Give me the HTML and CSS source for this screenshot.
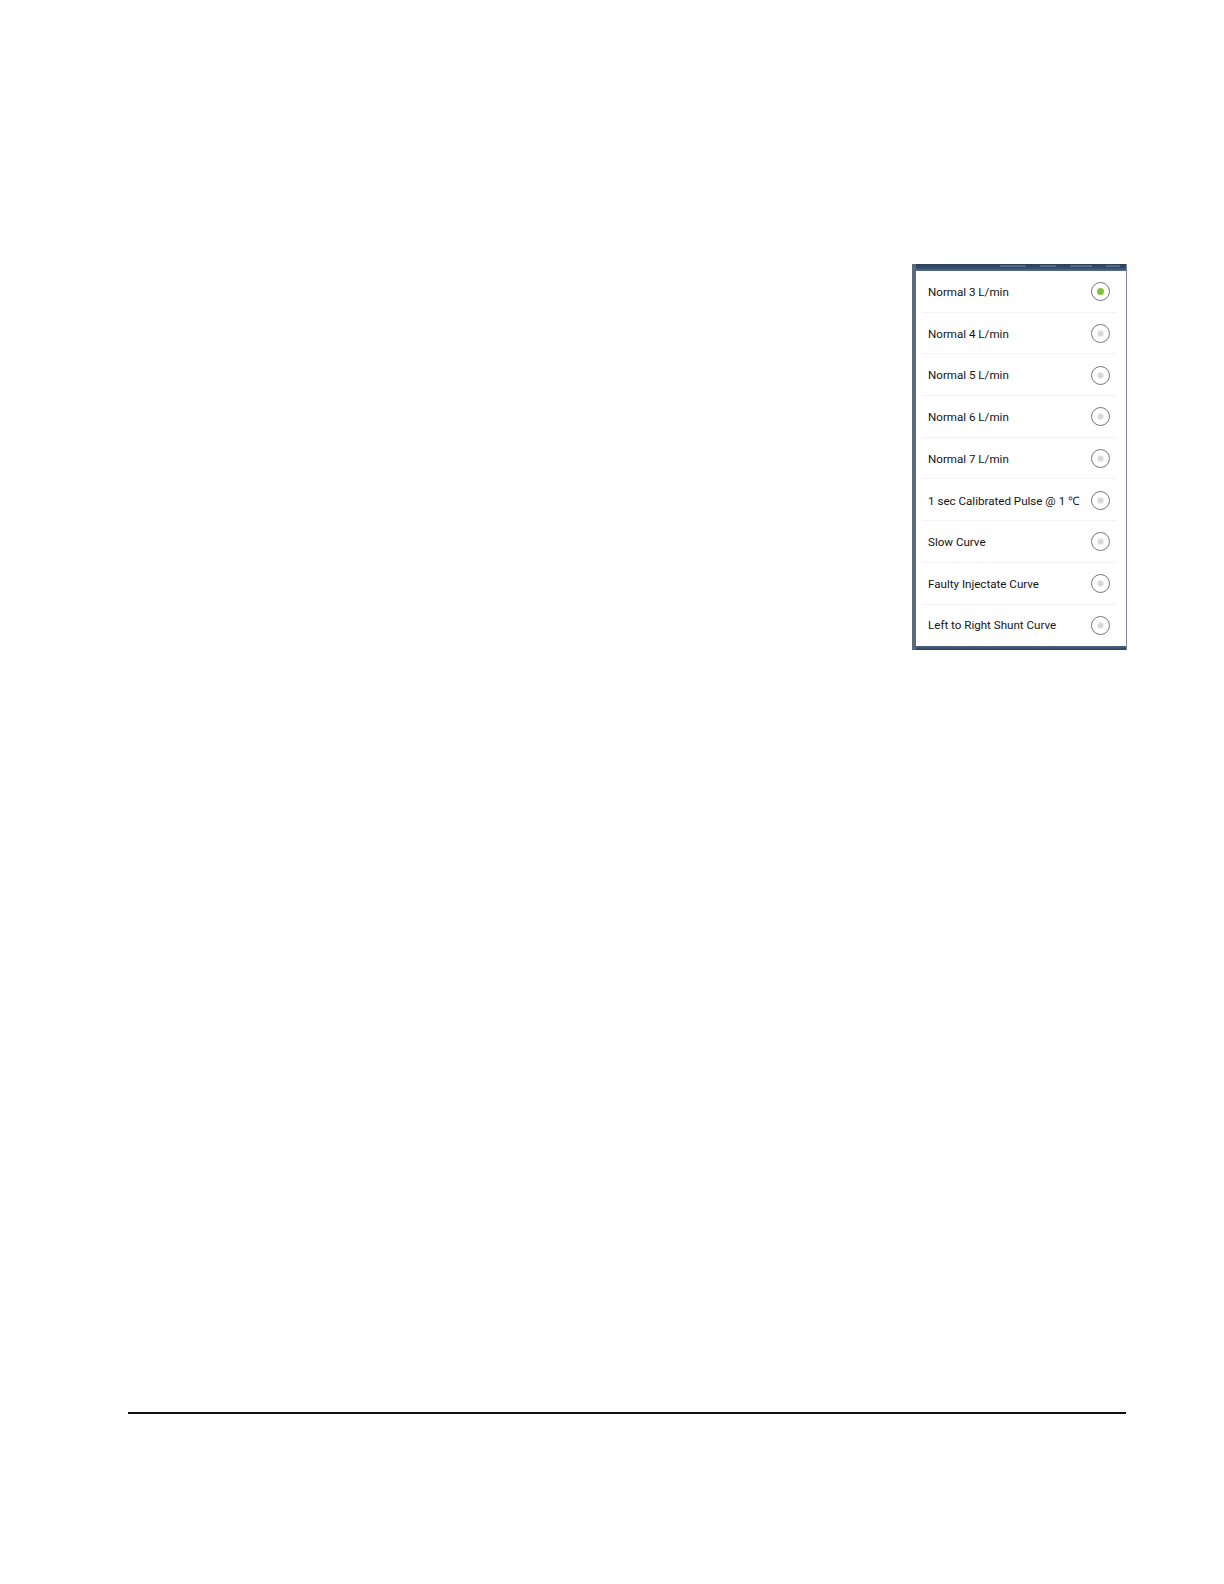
FILE: index.html
```html
<!DOCTYPE html>
<html>
<head>
<meta charset="utf-8">
<link rel="stylesheet" href="styles.css">
</head>
<body>
<div class="page">
  <div class="figure">
    <div class="topband">
      <span class="mark m1"></span><span class="mark m2"></span><span class="mark m3"></span><span class="mark m4"></span>
    </div>
    <div class="list">
      <div class="row"><span class="label">Normal 3 L/min</span><span class="radio on"></span></div>
      <div class="row"><span class="label">Normal 4 L/min</span><span class="radio"></span></div>
      <div class="row"><span class="label">Normal 5 L/min</span><span class="radio"></span></div>
      <div class="row"><span class="label">Normal 6 L/min</span><span class="radio"></span></div>
      <div class="row"><span class="label">Normal 7 L/min</span><span class="radio"></span></div>
      <div class="row"><span class="label">1 sec Calibrated Pulse @ 1 ℃</span><span class="radio"></span></div>
      <div class="row"><span class="label">Slow Curve</span><span class="radio"></span></div>
      <div class="row"><span class="label">Faulty Injectate Curve</span><span class="radio"></span></div>
      <div class="row last"><span class="label">Left to Right Shunt Curve</span><span class="radio"></span></div>
    </div>
    <div class="bottomband"></div>
  </div>
  <div class="rule"></div>
</div>
</body>
</html>
```

FILE: styles.css
```css
html, body {
  margin: 0;
  padding: 0;
  background: #ffffff;
  overflow: hidden;
}
.page {
  width: 1224px;
  height: 1584px;
  box-sizing: border-box;
  padding: 264px 97px 0 128px;
  display: flex;
  flex-direction: column;
  overflow: hidden;
}
.figure {
  align-self: flex-end;
  width: 215px;
  box-sizing: border-box;
  border-left: 4px solid #5b6b7a;
  border-right: 1px solid #7a8899;
  display: flex;
  flex-direction: column;
  background: #ffffff;
}
.topband {
  height: 7px;
  background: linear-gradient(#2b3e58 0, #34506f 60%, #5e7188 100%);
  display: flex;
  gap: 14px;
  padding-left: 84px;
  padding-top: 1px;
  box-sizing: border-box;
  align-items: flex-start;
}
.mark {
  height: 2px;
  background: #6f819b;
  opacity: 0.6;
}
.m1 { width: 26px; }
.m2 { width: 16px; }
.m3 { width: 22px; }
.m4 { width: 14px; }
.list {
  display: flex;
  flex-direction: column;
  padding-right: 2px;
}
.row {
  height: 41.7px;
  display: flex;
  align-items: center;
  justify-content: space-between;
  padding: 0 14px 0 12px;
  position: relative;
  box-sizing: border-box;
}
.row::after {
  content: "";
  position: absolute;
  left: 6px;
  right: 8px;
  bottom: 0;
  height: 1px;
  background: #f3f3f3;
}
.row.last::after { display: none; }
.label {
  font-family: Roboto, "Liberation Sans", sans-serif;
  font-size: 11.6px;
  color: #141414;
  white-space: nowrap;
}
.radio {
  width: 17px;
  height: 17px;
  border: 1.6px solid #767676;
  border-radius: 50%;
  display: flex;
  align-items: center;
  justify-content: center;
  flex-shrink: 0;
}
.radio::before {
  content: "";
  width: 5px;
  height: 5px;
  border-radius: 50%;
  background: #d6d6d6;
  box-shadow: 0 0 0 1px #ececec;
}
.radio.on::before {
  width: 7px;
  height: 7px;
  background: #7cc43a;
  box-shadow: none;
}
.bottomband {
  height: 4px;
  background: linear-gradient(#4d6482, #2d4260);
}
.rule {
  margin-top: 762px;
  width: 998px;
  height: 2px;
  background: #111111;
}
```
